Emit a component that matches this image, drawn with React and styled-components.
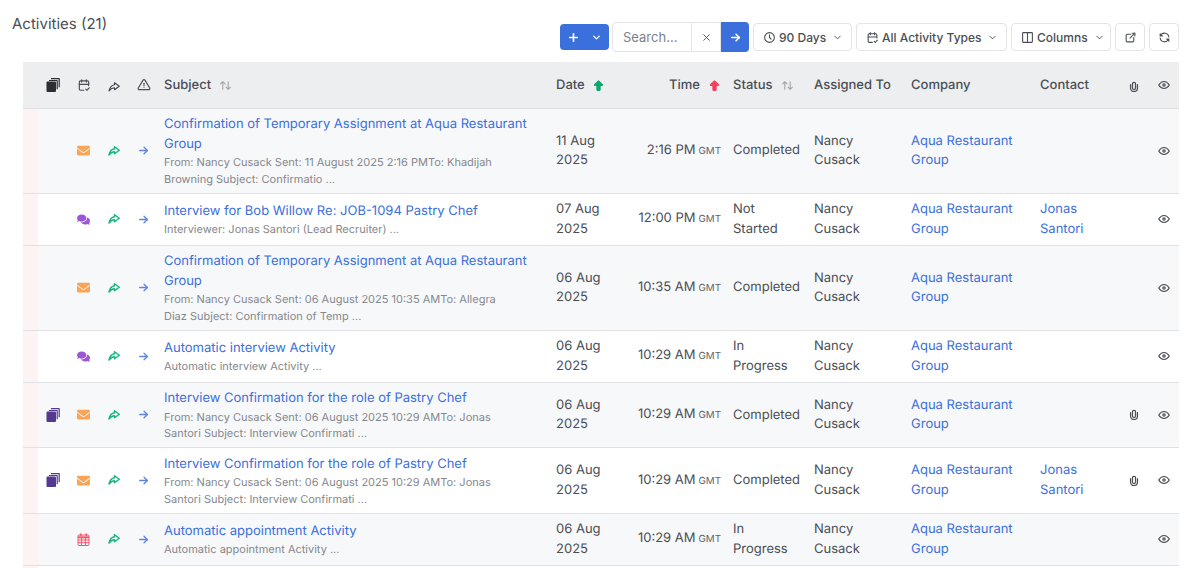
import React from "react";
import styled, {createGlobalStyle} from "styled-components";
import {FaEnvelope, FaComments} from "react-icons/fa";
import {
	TbPlus,
	TbChevronDown,
	TbX,
	TbArrowRight,
	TbClock,
	TbCalendarCheck,
	TbColumns2,
	TbExternalLink,
	TbRefresh,
	TbAlertTriangle,
	TbArrowsSort,
	TbEye,
	TbArrowBigUpFilled,
} from "react-icons/tb";

const GlobalStyle = createGlobalStyle`
	html, body {
		margin: 0;
		padding: 0;
		background: #fff;
		overflow: hidden;
	}
	body {
		font-family: "Inter", "Liberation Sans", sans-serif;
		font-size: 13px;
		color: #4a4e54;
		text-rendering: geometricPrecision;
	}
`;

const Page = styled.div`
	width: 1203px;
	height: 568px;
	overflow: hidden;
`;

const TitleBar = styled.div`
	display: flex;
	justify-content: space-between;
	align-items: flex-start;
	height: 62px;
	padding: 15px 24px 0 12px;
	box-sizing: border-box;
`;

const Heading = styled.h1`
	margin: 0;
	font-size: 15px;
	line-height: 18px;
	font-weight: 400;
	color: #4a4e54;
`;

const Toolbar = styled.div`
	display: flex;
	align-items: center;
	gap: 4px;
	margin-top: 7px;
`;

const AddButton = styled.button`
	display: flex;
	align-items: center;
	justify-content: center;
	gap: 11px;
	width: 49px;
	height: 26px;
	padding: 0;
	border: 0;
	border-radius: 4px;
	background: #3b6fdc;
	color: #fff;
	margin-right: -1px;
`;

const SearchGroup = styled.div`
	display: flex;
	align-items: stretch;
	height: 30px;
`;

const SearchInput = styled.input`
	width: 80px;
	box-sizing: border-box;
	padding: 0 10px;
	border: 1px solid #e2e4e8;
	border-radius: 4px 0 0 4px;
	font: inherit;
	color: #4a4e54;
	background: #fff;
	outline: none;
	&::placeholder {
		color: #7d8187;
		opacity: 1;
	}
`;

const ClearButton = styled.button`
	display: flex;
	align-items: center;
	justify-content: center;
	width: 29px;
	padding: 0;
	border: 1px solid #e2e4e8;
	border-left: 0;
	background: #fff;
	color: #4a4e54;
`;

const GoButton = styled.button`
	display: flex;
	align-items: center;
	justify-content: center;
	width: 28px;
	padding: 0;
	border: 0;
	border-radius: 0 4px 4px 0;
	background: #3b6fdc;
	color: #fff;
`;

const ToolButton = styled.button`
	display: flex;
	align-items: center;
	justify-content: ${(p) => (p.$square ? "center" : "flex-start")};
	gap: 3px;
	width: ${(p) => p.$width}px;
	height: 28px;
	box-sizing: border-box;
	padding: 0 0 0 ${(p) => (p.$square ? 0 : 9)}px;
	border: 1px solid #e2e4e8;
	border-radius: 4px;
	background: #fff;
	font: inherit;
	font-size: 12px;
	font-weight: 500;
	color: #4a4e54;
	white-space: nowrap;
`;

const DropChevron = styled(TbChevronDown)`
	margin-left: 3px;
`;

const Table = styled.table`
	width: 1156px;
	margin-left: 23px;
	border-collapse: collapse;
	table-layout: fixed;
`;

const HeadRow = styled.tr`
	height: 46px;
	background: #edeef0;
	border-bottom: 1px solid #dfe1e5;
`;

const HeadCell = styled.th`
	padding: 0 6px;
	font-size: 13px;
	font-weight: 500;
	text-align: ${(p) => p.$align || "left"};
	color: #4a4e54;
	white-space: nowrap;
	svg {
		vertical-align: -3px;
	}
`;

const Row = styled.tr`
	background: ${(p) => (p.$shaded ? "#f7f8fa" : "#fff")};
	border-bottom: 1px solid #dfe1e5;
`;

const Band = styled.td`
	padding: 0;
	background: #fdf3f2;
`;

const Cell = styled.td`
	padding: 6.5px 6px 5.5px;
	line-height: 19.5px;
	vertical-align: middle;
	text-align: ${(p) => p.$align || "left"};
	color: #4a4e54;
	svg {
		vertical-align: middle;
	}
`;

const LinkText = styled.a`
	color: #3b6fdc;
	text-decoration: none;
	cursor: pointer;
`;

const Preview = styled.div`
	max-width: 345px;
	font-size: 11px;
	line-height: 16.5px;
	color: #85888d;
`;

const Zone = styled.span`
	margin-left: 3px;
	font-size: 9.8px;
	color: #5f6368;
`;

const SortMark = styled.span`
	display: inline-block;
	margin-left: ${(p) => p.$gap || 8}px;
	color: ${(p) => p.$color || "#a0a4a9"};
	line-height: 0;
`;

function StackIcon({color}) {
	return (
		<svg width="14" height="14" viewBox="0 0 14 14" fill={color}>
			<rect x="0.5" y="3.5" width="9.5" height="10.5" rx="1" />
			<path d="M3 1.9h7.8c.6 0 1 .4 1 1v8.3h-1.2V3.1H3z" />
			<path d="M5 0h7.8c.6 0 1 .4 1 1v8.3h-1.2V1.2H5z" />
		</svg>
	);
}

function ShareIcon({color, weight}) {
	return (
		<svg width="12" height="10" viewBox="0 0 24 20" fill="none" stroke={color} strokeWidth={weight} strokeLinejoin="round" strokeLinecap="round">
			<path d="M13 1.5v4C7 6.5 3.5 11 2 18c3.5-4.5 6.5-6.5 11-6.5v4l9.5-7z" />
		</svg>
	);
}

function ClipIcon() {
	return (
		<svg width="10" height="11" viewBox="0 0 13 14" fill="none" stroke="currentColor" strokeWidth="1.6" strokeLinecap="round">
			<path d="M2 4.5V9a4.5 4.5 0 0 0 9 0V4.5" />
			<path d="M4.5 9V3.5a2 2 0 0 1 4 0V9a2 2 0 0 1-4 0" />
		</svg>
	);
}

function CalendarGridIcon({color}) {
	return (
		<svg width="13" height="13" viewBox="0 0 13 13" fill="none" stroke={color} strokeWidth="1">
			<rect x="1" y="2" width="11" height="10.5" rx="1" />
			<path d="M1 4.3h11" strokeWidth="2" />
			<path d="M1 7h11M1 9.7h11M4.6 4.3v8M8.4 4.3v8" />
			<path d="M3.7 0.5v2.5M9.3 0.5v2.5" strokeWidth="1.6" />
		</svg>
	);
}

const ACCENT = {
	mail: <FaEnvelope size={13} color="#f8a557" />,
	chat: <FaComments size={13} color="#9b55d6" />,
	date: <CalendarGridIcon color="#f4566a" />,
};

const mailFrom = (sent, rest) => `From: Nancy Cusack Sent: ${sent}To: ${rest}`;

const ACTIVITIES = [
	{
		kind: "mail",
		subject: "Confirmation of Temporary Assignment at Aqua Restaurant Group",
		preview: mailFrom("11 August 2025 2:16 PM", "Khadijah Browning Subject: Confirmatio ..."),
		date: "11 Aug 2025",
		time: "2:16 PM",
		status: "Completed",
	},
	{
		kind: "chat",
		subject: "Interview for Bob Willow Re: JOB-1094 Pastry Chef",
		preview: "Interviewer: Jonas Santori (Lead Recruiter) ...",
		date: "07 Aug 2025",
		time: "12:00 PM",
		status: "Not Started",
		contact: "Jonas Santori",
	},
	{
		kind: "mail",
		subject: "Confirmation of Temporary Assignment at Aqua Restaurant Group",
		preview: mailFrom("06 August 2025 10:35 AM", "Allegra Diaz Subject: Confirmation of Temp ..."),
		date: "06 Aug 2025",
		time: "10:35 AM",
		status: "Completed",
	},
	{
		kind: "chat",
		subject: "Automatic interview Activity",
		preview: "Automatic interview Activity ...",
		date: "06 Aug 2025",
		time: "10:29 AM",
		status: "In Progress",
	},
	{
		kind: "mail",
		stacked: true,
		attached: true,
		subject: "Interview Confirmation for the role of Pastry Chef",
		preview: mailFrom("06 August 2025 10:29 AM", "Jonas Santori Subject: Interview Confirmati ..."),
		date: "06 Aug 2025",
		time: "10:29 AM",
		status: "Completed",
	},
	{
		kind: "mail",
		stacked: true,
		attached: true,
		subject: "Interview Confirmation for the role of Pastry Chef",
		preview: mailFrom("06 August 2025 10:29 AM", "Jonas Santori Subject: Interview Confirmati ..."),
		date: "06 Aug 2025",
		time: "10:29 AM",
		status: "Completed",
		contact: "Jonas Santori",
	},
	{
		kind: "date",
		subject: "Automatic appointment Activity",
		preview: "Automatic appointment Activity ...",
		date: "06 Aug 2025",
		time: "10:29 AM",
		status: "In Progress",
	},
];

const WIDTHS = [15, 30, 31, 30, 29, 392, 75, 102, 81, 97, 129, 85, 30, 30];

export default function App() {
	return (
		<Page>
			<GlobalStyle />
			<TitleBar>
				<Heading>Activities (21)</Heading>
				<Toolbar>
					<AddButton>
						<TbPlus size={13} strokeWidth={3} />
						<TbChevronDown size={11} strokeWidth={3} />
					</AddButton>
					<SearchGroup>
						<SearchInput placeholder="Search..." />
						<ClearButton>
							<TbX size={11} strokeWidth={2} />
						</ClearButton>
						<GoButton>
							<TbArrowRight size={13} strokeWidth={3} />
						</GoButton>
					</SearchGroup>
					<ToolButton $width={99}>
						<TbClock size={13} />
						90 Days
						<DropChevron size={11} />
					</ToolButton>
					<ToolButton $width={151}>
						<TbCalendarCheck size={13} />
						All Activity Types
						<DropChevron size={11} />
					</ToolButton>
					<ToolButton $width={100}>
						<TbColumns2 size={13} />
						Columns
						<DropChevron size={11} />
					</ToolButton>
					<ToolButton $square $width={30}>
						<TbExternalLink size={13} />
					</ToolButton>
					<ToolButton $square $width={30}>
						<TbRefresh size={13} />
					</ToolButton>
				</Toolbar>
			</TitleBar>
			<Table>
				<colgroup>
					{WIDTHS.map((w, i) => (
						<col key={i} width={w} />
					))}
				</colgroup>
				<thead>
					<HeadRow>
						<HeadCell />
						<HeadCell $align="center">
							<StackIcon color="#2b2e33" />
						</HeadCell>
						<HeadCell $align="center">
							<TbCalendarCheck size={14} />
						</HeadCell>
						<HeadCell $align="center">
							<ShareIcon color="#3f4349" weight={2.2} />
						</HeadCell>
						<HeadCell $align="center">
							<TbAlertTriangle size={14} />
						</HeadCell>
						<HeadCell>
							Subject
							<SortMark>
								<TbArrowsSort size={13} />
							</SortMark>
						</HeadCell>
						<HeadCell>
							Date
							<SortMark $gap={7} $color="#0aa86a">
								<TbArrowBigUpFilled size={13} />
							</SortMark>
						</HeadCell>
						<HeadCell $align="right">
							Time
							<SortMark $color="#f4405a">
								<TbArrowBigUpFilled size={13} />
							</SortMark>
						</HeadCell>
						<HeadCell>
							Status
							<SortMark>
								<TbArrowsSort size={13} />
							</SortMark>
						</HeadCell>
						<HeadCell>Assigned To</HeadCell>
						<HeadCell>Company</HeadCell>
						<HeadCell>Contact</HeadCell>
						<HeadCell $align="center">
							<ClipIcon />
						</HeadCell>
						<HeadCell $align="center">
							<TbEye size={14} />
						</HeadCell>
					</HeadRow>
				</thead>
				<tbody>
					{ACTIVITIES.map((a, i) => (
						<Row key={i} $shaded={i % 2 === 0}>
							<Band />
							<Cell $align="center">{a.stacked && <StackIcon color="#55388f" />}</Cell>
							<Cell $align="center">{ACCENT[a.kind]}</Cell>
							<Cell $align="center">
								<ShareIcon color="#17b584" weight={3} />
							</Cell>
							<Cell $align="center">
								<TbArrowRight size={13} strokeWidth={2.4} color="#5f85e4" />
							</Cell>
							<Cell>
								<LinkText>{a.subject}</LinkText>
								<Preview>{a.preview}</Preview>
							</Cell>
							<Cell>{a.date}</Cell>
							<Cell $align="right">
								{a.time}
								<Zone>GMT</Zone>
							</Cell>
							<Cell>{a.status}</Cell>
							<Cell>Nancy Cusack</Cell>
							<Cell>
								<LinkText>Aqua Restaurant Group</LinkText>
							</Cell>
							<Cell>{a.contact && <LinkText>{a.contact}</LinkText>}</Cell>
							<Cell $align="center">{a.attached && <ClipIcon />}</Cell>
							<Cell $align="center">
								<TbEye size={14} />
							</Cell>
						</Row>
					))}
					<Row>
						<Band />
						<Cell colSpan={13} />
					</Row>
				</tbody>
			</Table>
		</Page>
	);
}
